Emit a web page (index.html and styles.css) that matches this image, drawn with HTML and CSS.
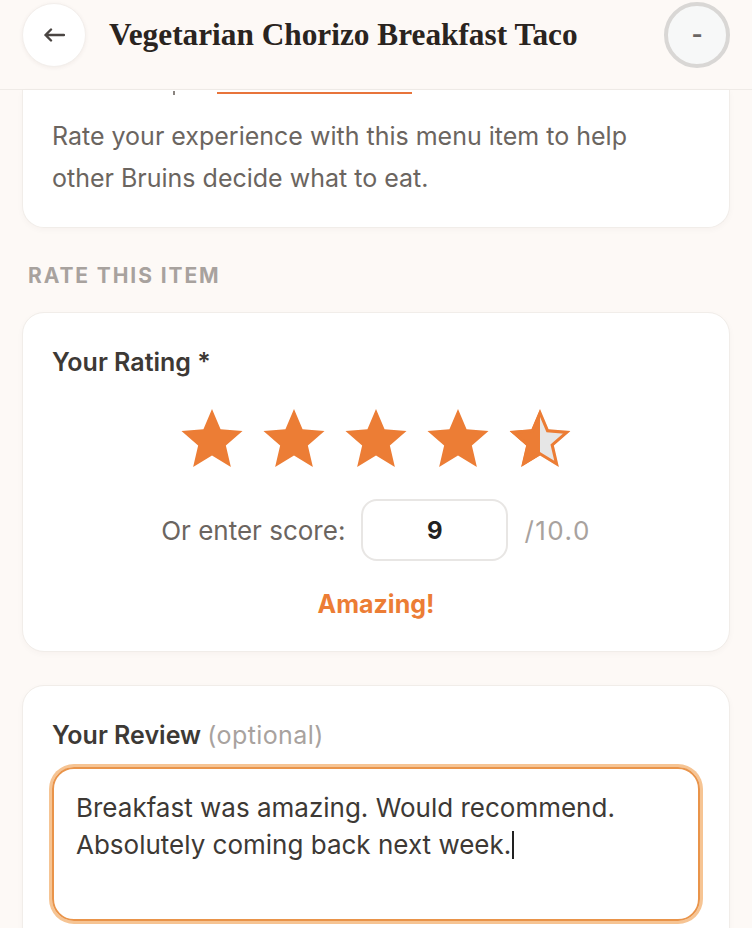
FILE: index.html
```html
<!DOCTYPE html>
<html lang="en">
<head>
    <meta charset="UTF-8">
    <title>Rate Item</title>
    <link rel="stylesheet" href="styles.css">
</head>
<body>
    <header class="topbar">
        <button class="rond-knop terug" aria-label="Back">
            <svg width="22" height="14" viewBox="0 0 22 14"><path d="M21 7H2.5M8 1.5L2.5 7 8 12.5" fill="none" stroke="#4a4542" stroke-width="2.4" stroke-linecap="round" stroke-linejoin="round"/></svg>
        </button>
        <h1 class="titel">Vegetarian Chorizo Breakfast Taco</h1>
        <button class="rond-knop min" aria-label="Account">-</button>
    </header>

    <main class="inhoud">
        <section class="kaart kaart-intro">
            <div class="tab-lijn"><span class="tik"></span><span class="actief"></span></div>
            <p class="uitleg">Rate your experience with this menu item to help other Bruins decide what to eat.</p>
        </section>

        <h2 class="sectie-kop">RATE THIS ITEM</h2>

        <section class="kaart kaart-score">
            <h3 class="veld-label">Your Rating *</h3>
            <div class="sterren">
                <svg class="ster" viewBox="2 2 20 19"><path d="M12 17.27L18.18 21l-1.64-7.03L22 9.24l-7.19-.61L12 2 9.19 8.63 2 9.24l5.46 4.73L5.82 21z" fill="#ec7d35"/></svg>
                <svg class="ster" viewBox="2 2 20 19"><path d="M12 17.27L18.18 21l-1.64-7.03L22 9.24l-7.19-.61L12 2 9.19 8.63 2 9.24l5.46 4.73L5.82 21z" fill="#ec7d35"/></svg>
                <svg class="ster" viewBox="2 2 20 19"><path d="M12 17.27L18.18 21l-1.64-7.03L22 9.24l-7.19-.61L12 2 9.19 8.63 2 9.24l5.46 4.73L5.82 21z" fill="#ec7d35"/></svg>
                <svg class="ster" viewBox="2 2 20 19"><path d="M12 17.27L18.18 21l-1.64-7.03L22 9.24l-7.19-.61L12 2 9.19 8.63 2 9.24l5.46 4.73L5.82 21z" fill="#ec7d35"/></svg>
                <svg class="ster" viewBox="2 2 20 19">
                    <defs>
                        <linearGradient id="half" x1="0" x2="1" y1="0" y2="0">
                            <stop offset="50%" stop-color="#ec7d35"/>
                            <stop offset="50%" stop-color="#e6e6e6"/>
                        </linearGradient>
                        <clipPath id="ster-vorm"><path d="M12 17.27L18.18 21l-1.64-7.03L22 9.24l-7.19-.61L12 2 9.19 8.63 2 9.24l5.46 4.73L5.82 21z"/></clipPath>
                    </defs>
                    <path d="M12 17.27L18.18 21l-1.64-7.03L22 9.24l-7.19-.61L12 2 9.19 8.63 2 9.24l5.46 4.73L5.82 21z" fill="url(#half)" stroke="#ec7d35" stroke-width="2" clip-path="url(#ster-vorm)"/>
                </svg>
            </div>
            <div class="score-rij">
                <span class="score-tekst">Or enter score:</span>
                <input class="score-invoer" type="text" value="9">
                <span class="score-max">/10.0</span>
            </div>
            <p class="oordeel">Amazing!</p>
        </section>

        <section class="kaart kaart-review">
            <h3 class="veld-label">Your Review <span class="optioneel">(optional)</span></h3>
            <div class="review-vak">Breakfast was amazing. Would recommend. Absolutely coming back next week.<span class="cursor"></span></div>
        </section>
    </main>
</body>
</html>
```

FILE: styles.css
```css
body {
    margin: 0;
    background-color: #fdf9f6;
    font-family: Inter, "Noto Sans", sans-serif;
    color: #3d3935;
    overflow: hidden;
}

.topbar {
    display: flex;
    align-items: center;
    box-sizing: border-box;
    height: 90px;
    padding: 0 22px 20px 22px;
    border-bottom: 1px solid #efebe7;
    background-color: #fdf9f6;
}

.rond-knop {
    display: flex;
    align-items: center;
    justify-content: center;
    padding: 0;
    border-radius: 50%;
    font-family: inherit;
}

.terug {
    width: 64px;
    height: 64px;
    background-color: #fff;
    border: 1px solid #f3efec;
    box-shadow: 0 1px 4px rgba(60, 40, 20, 0.06);
}

.titel {
    flex: 1;
    margin: 0 0 0 23px;
    font-family: "Liberation Serif", serif;
    font-size: 31.3px;
    font-weight: 700;
    color: #2a2420;
}

.min {
    width: 66px;
    height: 66px;
    background-color: #f7f8f8;
    border: 4px solid #d9d7d5;
    color: #6a6664;
    font-size: 24px;
    font-weight: 700;
}

.inhoud {
    padding: 0 22px;
}

.kaart {
    background-color: #fff;
    border: 1px solid #f1ede9;
    border-radius: 22px;
    box-shadow: 0 2px 6px rgba(60, 40, 20, 0.03);
    padding: 0 29px;
}

.kaart-intro {
    border-top: 0;
    border-radius: 0 0 22px 22px;
    padding-bottom: 28px;
}

.tab-lijn {
    display: flex;
    align-items: flex-start;
    height: 5px;
}

.tik {
    width: 2px;
    height: 4px;
    margin: 1px 0 0 121px;
    background-color: #8a8480;
}

.actief {
    width: 195px;
    height: 2px;
    margin: 2px 0 0 42px;
    background-color: #e8743b;
}

.uitleg {
    max-width: 600px;
    margin: 20px 0 0 0;
    font-size: 25px;
    line-height: 42px;
    color: #6b6560;
}

.sectie-kop {
    margin: 35px 0 23px 6px;
    font-size: 21px;
    line-height: 26px;
    font-weight: 700;
    letter-spacing: 1.9px;
    color: #a8a29e;
}

.veld-label {
    margin: 0;
    padding-top: 34px;
    font-size: 25px;
    line-height: 31px;
    font-weight: 600;
    color: #3d3935;
}

.optioneel {
    font-weight: 400;
    letter-spacing: 0.4px;
    color: #a8a29e;
}

.sterren {
    display: flex;
    justify-content: center;
    gap: 20px;
    margin-top: 31px;
}

.ster {
    width: 62px;
    height: 58px;
}

.score-rij {
    display: flex;
    align-items: center;
    justify-content: center;
    gap: 16px;
    margin-top: 32px;
    font-size: 26px;
}

.score-tekst {
    color: #6b6560;
}

.score-invoer {
    box-sizing: border-box;
    width: 147px;
    height: 62px;
    border: 2px solid #e8e6e4;
    border-radius: 16px;
    text-align: center;
    font-family: inherit;
    font-size: 24px;
    font-weight: 700;
    color: #222;
    outline: none;
}

.score-max {
    letter-spacing: 1.5px;
    color: #a8a29e;
}

.oordeel {
    margin: 29px 0 0 0;
    padding-bottom: 32px;
    text-align: center;
    font-size: 25px;
    line-height: 29px;
    font-weight: 700;
    color: #ec7d35;
}

.kaart-score {
    padding-bottom: 0;
}

.kaart-review {
    margin-top: 33px;
    height: 300px;
}

.review-vak {
    box-sizing: border-box;
    height: 154px;
    margin-top: 16px;
    padding: 20px 22px;
    border: 2px solid #e9944a;
    border-radius: 22px;
    box-shadow: 0 0 0 3px #f6c493;
    font-size: 26px;
    line-height: 37px;
    color: #3d3935;
}

.cursor {
    display: inline-block;
    width: 2px;
    height: 28px;
    margin-left: 1px;
    vertical-align: -5px;
    background-color: #222;
}
```
